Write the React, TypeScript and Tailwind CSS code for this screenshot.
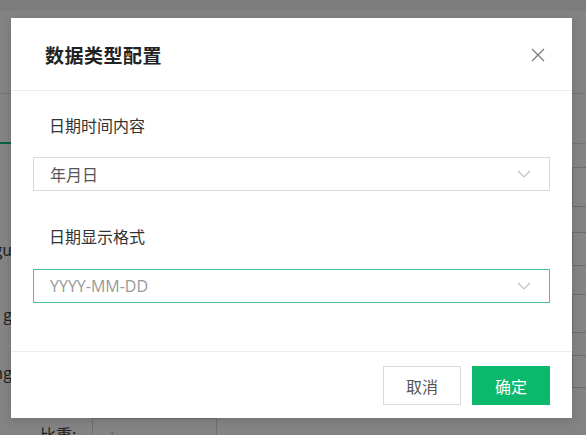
import React from "react";

const font = { fontFamily: '"Noto Sans CJK SC", "Noto Sans", sans-serif' };

function Chevron() {
  return (
    <svg width="14" height="8" viewBox="0 0 14 8" fill="none">
      <path d="M1 1 L7 7 L13 1" stroke="#c0c0c0" strokeWidth="1.2" />
    </svg>
  );
}

function BgRow({ h, mt, label }: { h: number; mt: number; label?: string }) {
  return (
    <div className="flex items-center" style={{ height: h, marginTop: mt }}>
      <div className="w-[12px] overflow-hidden flex justify-end whitespace-nowrap text-[16px] text-[#1e1e1e]">{label}</div>
      <div className="flex-1" />
      <div className="w-[14px] h-full border border-r-0 border-[#6c6c6c] bg-[#858585]" />
    </div>
  );
}

export default function App() {
  return (
    <div className="relative w-[586px] h-[435px] overflow-hidden bg-[#838383]" style={font}>
      {/* underlying page (dimmed) */}
      <div className="flex flex-col">
        <div className="h-[11px] bg-[#7c7c7c]" />
        <div className="h-[83px] border-b border-[#747474]" />
        <div className="h-[50px] flex">
          <div className="w-[11px] h-full flex items-end">
            <div className="w-full h-[2px] bg-[#0b5e3c]" />
          </div>
          <div className="flex-1" />
          <div className="w-[14px] border-b border-[#747474]" />
        </div>
        <BgRow h={40} mt={23} />
        <BgRow h={34} mt={25} label="gu" />
        <BgRow h={39} mt={28} label="g" />
        <BgRow h={33} mt={22} label="ng" />
        <div className="flex items-start h-[24px] mt-[30px]">
          <div className="w-[92px] pl-[40px] pt-[6px] text-[16px] leading-[20px] text-[#1e1e1e] whitespace-nowrap">比重:</div>
          <div className="w-[125px] h-[24px] border border-[#6f6f6f] pl-[16px] pt-[8px] text-[12px] text-[#6a6a6a]">1</div>
        </div>
      </div>

      {/* modal */}
      <div className="absolute inset-0">
        <div className="ml-[11px] mt-[18px] w-[561px] h-[400px] bg-white flex flex-col shadow-[0_2px_8px_rgba(0,0,0,0.15)]">
          <div className="h-[73px] border-b border-[#ececec] flex items-center justify-between pl-[34px] pr-[27px] pt-[2px]">
            <div className="text-[19px] font-bold text-[#222] tracking-[0.5px]">数据类型配置</div>
            <svg width="14" height="14" viewBox="0 0 14 14" fill="none">
              <path d="M1 1 L13 13 M13 1 L1 13" stroke="#7a7a7a" strokeWidth="1.3" />
            </svg>
          </div>
          <div className="flex-1 px-[22px] pt-[22px]">
            <div className="pl-[16px] text-[16px] leading-[24px] text-[#333]">日期时间内容</div>
            <div className="mt-[20px] h-[34px] border border-[#d9d9d9] flex items-center justify-between pl-[16px] pr-[18px]">
              <span className="text-[16px] text-[#555]">年月日</span>
              <Chevron />
            </div>
            <div className="mt-[33px] pl-[16px] text-[16px] leading-[24px] text-[#333]">日期显示格式</div>
            <div className="mt-[21px] h-[34px] border border-[#4cbf9b] flex items-center justify-between pl-[16px] pr-[18px]">
              <span className="text-[16px] text-[#999]" style={{ fontFamily: '"Open Sans", "Noto Sans CJK SC", sans-serif' }}>YYYY-MM-DD</span>
              <Chevron />
            </div>
          </div>
          <div className="h-[67px] border-t border-[#ececec] flex justify-end items-start gap-[11px] pt-[14px] pr-[22px]">
            <button className="w-[78px] h-[39px] border border-[#d9d9d9] bg-white text-[16px] text-[#555]">取消</button>
            <button className="w-[78px] h-[39px] bg-[#0cb96c] text-[16px] text-white">确定</button>
          </div>
        </div>
      </div>
    </div>
  );
}
